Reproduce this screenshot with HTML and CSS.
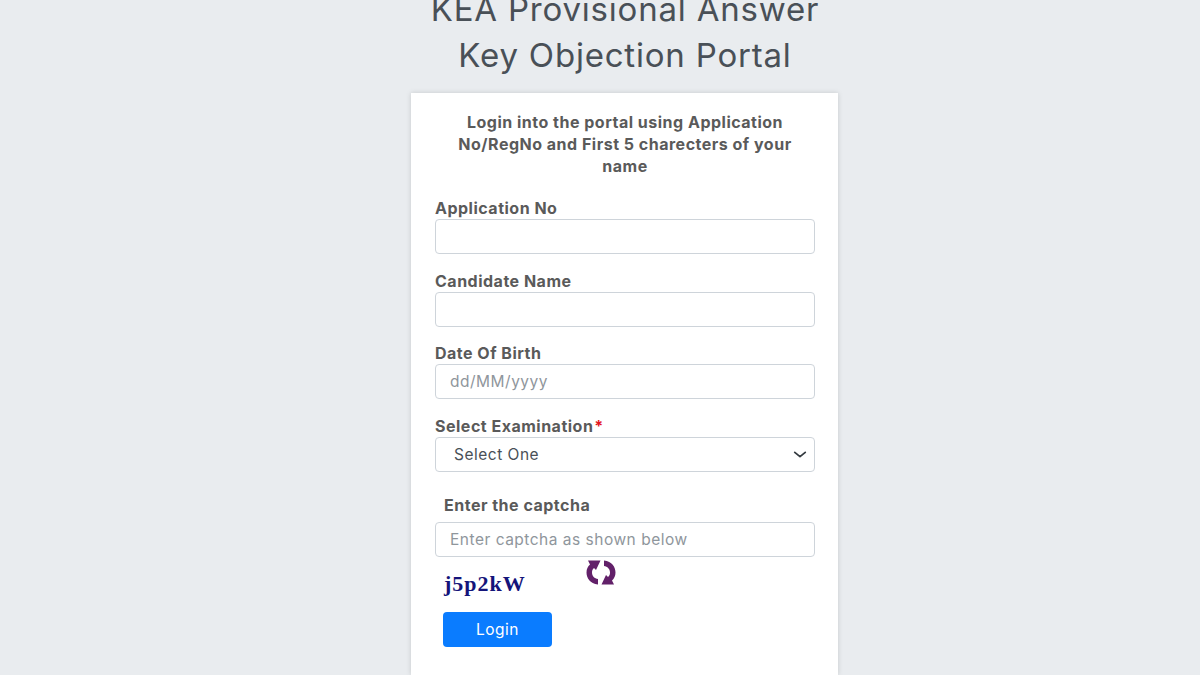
FILE: index.html
```html
<!DOCTYPE html>
<html lang="en">
<head>
  <meta charset="UTF-8">
  <meta name="viewport" content="width=device-width, initial-scale=1.0">
  <title>KEA Provisional Answer Key Objection Portal</title>
  <link rel="stylesheet" href="styles.css">
</head>
<body>
  <h1 class="page-title">KEA Provisional Answer<br>Key Objection Portal</h1>
  <form class="login-card">
    <p class="login-note">Login into the portal using Application No/RegNo and First 5 charecters of your name</p>
    <div class="field">
      <label for="app-no">Application No</label>
      <input type="text" id="app-no">
    </div>
    <div class="field">
      <label for="cand-name">Candidate Name</label>
      <input type="text" id="cand-name">
    </div>
    <div class="field">
      <label for="dob">Date Of Birth</label>
      <input type="text" id="dob" placeholder="dd/MM/yyyy">
    </div>
    <div class="field">
      <label for="exam">Select Examination<span class="required">*</span></label>
      <div class="select-box">
        <select id="exam">
          <option>Select One</option>
        </select>
        <svg class="select-arrow" viewBox="0 0 16 10" width="14" height="9" aria-hidden="true">
          <path d="M2 2.5 L8 7.5 L14 2.5" fill="none" stroke="#343a40" stroke-width="2" stroke-linecap="round" stroke-linejoin="round"/>
        </svg>
      </div>
    </div>
    <div class="field captcha-field">
      <label class="captcha-label" for="captcha">Enter the captcha</label>
      <input type="text" id="captcha" placeholder="Enter captcha as shown below">
    </div>
    <div class="captcha-row">
      <span class="captcha-text">j5p2kW</span>
      <svg class="refresh-icon" viewBox="0 0 32 28" width="32" height="28" aria-hidden="true">
        <path id="refresh-half" d="M13 25.500 C5 24.500 1.500 19 1.500 13.500 C1.500 10 2.800 7.500 5 5.500 L3 1.500 H15.500 L11 11 L9 9 C7.500 10 7 11.800 7 13.500 C7 17 9.500 19.500 13 20 Z" fill="#622069"/>
        <use href="#refresh-half" transform="rotate(180 16 13.500)"/>
      </svg>
    </div>
    <button type="button" class="login-button">Login</button>
  </form>
</body>
</html>
```

FILE: styles.css
```css
body {
  margin: 0;
  height: 675px;
  overflow: hidden;
  background-color: #e9ecef;
  font-family: Inter, "Noto Sans", sans-serif;
  color: #5a5a5a;
}

.page-title {
  margin: -14px 0 15px;
  padding-left: 50px;
  text-align: center;
  font-size: 33px;
  font-weight: 400;
  line-height: 46px;
  letter-spacing: 0.8px;
  color: #495057;
}

.login-card {
  width: 380px;
  height: 564px;
  margin-left: 411px;
  padding: 18px 23px 0 24px;
  background-color: #fff;
  box-shadow: 0 0 5px rgba(0, 0, 0, 0.15);
}

.login-note {
  margin: 0 0 21px;
  padding: 0 18px;
  text-align: center;
  font-size: 16px;
  font-weight: 700;
  line-height: 22px;
  letter-spacing: 0.5px;
}

.field {
  margin-bottom: 16.500px;
}

.field label {
  display: block;
  height: 21px;
  font-size: 16px;
  font-weight: 700;
  line-height: 21px;
  letter-spacing: 0.5px;
}

.required {
  margin-left: 1px;
  color: #e3141e;
}

.field input,
.field select {
  display: block;
  width: 100%;
  height: 35px;
  box-sizing: border-box;
  padding: 0 14px;
  border: 1px solid #ced4da;
  border-radius: 4px;
  background-color: #fff;
  font-family: inherit;
  font-size: 15.500px;
  letter-spacing: 0.5px;
  color: #495057;
}

.field input::placeholder {
  color: #8f969c;
  opacity: 1;
}

.select-box {
  position: relative;
}

.field select {
  appearance: none;
  padding-left: 18px;
}

.select-arrow {
  position: absolute;
  top: 13px;
  right: 8px;
}

.captcha-field {
  margin-top: 23px;
  margin-bottom: 0;
}

.field .captcha-label {
  height: 27px;
  padding-left: 9px;
}

.captcha-row {
  display: flex;
  height: 55px;
  padding-left: 9px;
}

.captcha-text {
  width: 141px;
  margin-top: 15px;
  font-family: "Liberation Serif", serif;
  font-size: 22px;
  font-weight: 700;
  letter-spacing: 1px;
  line-height: 24px;
  color: #14147a;
}

.refresh-icon {
  margin-top: 2px;
}

.login-button {
  display: block;
  width: 109px;
  height: 35px;
  margin-left: 8px;
  border: none;
  border-radius: 4px;
  background-color: #0a7cff;
  font-family: inherit;
  font-size: 15.500px;
  letter-spacing: 0.5px;
  color: #fff;
}
```
